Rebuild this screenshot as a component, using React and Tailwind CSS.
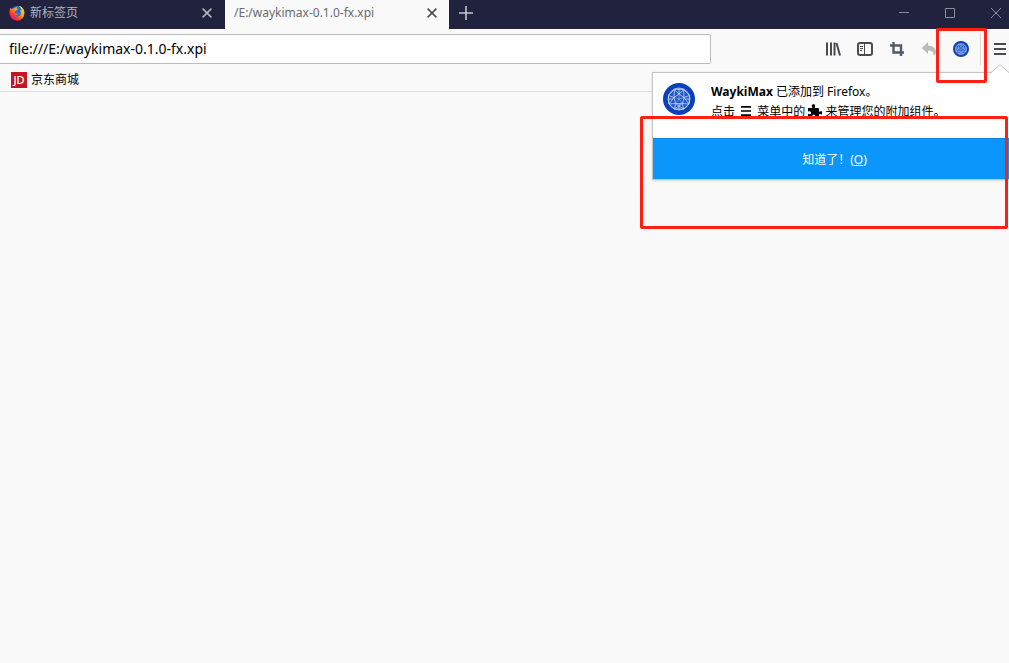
import React from "react";

function FirefoxLogo() {
  return (
    <svg viewBox="0 0 16 16" className="size-4 shrink-0" aria-hidden="true">
      <defs>
        <linearGradient id="flame" x1="0.9" y1="0.1" x2="0.2" y2="0.9">
          <stop offset="0" stopColor="#ffe226" />
          <stop offset="0.45" stopColor="#ff9a16" />
          <stop offset="0.75" stopColor="#ff3b2f" />
          <stop offset="1" stopColor="#e0157a" />
        </linearGradient>
      </defs>
      <circle cx="8" cy="7.6" r="6.6" fill="#1b6fe0" />
      <path
        d="M1.3 2.8 3 4.2C4 3.2 5 3 5.8 3.2L7.6 1.4c0 1.4.4 2.2 1.2 3L6.900 5.700C6 6.200 5.600 7 6 7.800c.8 1.300 2.400.2 3.500.8-.7 1.500-2.700 2.300-4.200 1.400 1 1.700 4 2.200 5.600.5 1.500-1.700 1.300-4-.1-5.600 1 .2 1.500.7 1.900 1.300C12.600 4 11.400 2.300 9.500.8c3.300.6 6 3.400 6 7.300A7.500 7.500 0 0 1 .5 8.200C.4 6 .8 4.300 1.300 2.800Z"
        fill="url(#flame)"
      />
    </svg>
  );
}

function CloseIcon() {
  return (
    <svg viewBox="0 0 10 10" className="size-2.5" fill="none" stroke="currentColor" strokeWidth="1.5" aria-hidden="true">
      <path d="M.6.6 9.400 9.400M9.400.6.6 9.400" />
    </svg>
  );
}

function LibraryIcon() {
  return (
    <svg viewBox="0 0 16 16" className="size-4" fill="none" stroke="#4a4a4f" strokeWidth="2" aria-hidden="true">
      <path d="M2 1.500v13M6 1.500v13M9.500 1.500v13M11.500 2l3.500 12.500" />
    </svg>
  );
}

function SidebarIcon() {
  return (
    <svg viewBox="0 0 16 16" className="size-4" fill="none" stroke="#4a4a4f" aria-hidden="true">
      <rect x="1" y="2" width="14" height="12" rx="2" strokeWidth="2" />
      <path d="M7.500 3v10" strokeWidth="1" />
      <path d="M3 5.500h3M3 7.500h3M3 9.500h2" strokeWidth="1" />
    </svg>
  );
}

function CropIcon() {
  return (
    <svg viewBox="0 0 16 16" className="size-4" fill="none" stroke="#4f5b66" strokeWidth="2.400" aria-hidden="true">
      <path d="M1 4.500h11V15M4.500 1v10.500H15" />
    </svg>
  );
}

function UndoIcon() {
  return (
    <svg viewBox="0 0 16 16" className="size-4" fill="#b9bbbe" aria-hidden="true">
      <path d="M7 1v3.500c5 .1 8 3.300 8 6.500 0 1.700-1 3-2.600 3.600.8-3.300-1.700-5-5.400-5V13L.8 7Z" />
    </svg>
  );
}

function MenuIcon({ className }) {
  return (
    <svg viewBox="0 0 12 12" className={className} stroke="currentColor" strokeWidth="2" aria-hidden="true">
      <path d="M0 1h12M0 6h12M0 11h12" />
    </svg>
  );
}

function PuzzleIcon() {
  return (
    <svg viewBox="1 1 14 14" className="inline size-3.5 align-[-2px]" aria-hidden="true">
      <path d="M1 5h3.700c.8 0 .8-.5.5-1C4.300 2.400 5 1.200 6.500 1.200S8.700 2.400 7.900 4c-.3.600-.2 1 .6 1H11c.6 0 1 .4 1 1v2c0 .8.500.9 1.100.5 1.300-.8 2.700-.1 2.700 1.300s-1.400 2.100-2.700 1.300c-.6-.4-1.100-.2-1.100.6V14c0 .6-.4 1-1 1H8.500c-.8 0-.9-.5-.5-1.100.7-1.100.1-2.100-1.200-2.100s-2 1-1.300 2.100c.4.600.3 1.100-.5 1.100H2c-.6 0-1-.4-1-1v-2.500c0-.8.500-.8 1-.5 1.200.7 2.100 0 2.100-1.200S3.200 7.700 2 8.400c-.6.300-1 .2-1-.6Z" />
    </svg>
  );
}

function WaykiLogo({ className }) {
  return (
    <svg viewBox="0 0 32 32" className={className} aria-hidden="true">
      <circle cx="16" cy="16" r="16" fill="#0a40ba" />
      <circle cx="16" cy="16" r="11" fill="#1f55c4" />
      <g fill="none" stroke="#c3d6fb" strokeWidth="0.8">
        <circle cx="16" cy="16" r="11" />
        <path d="M16 5v6M16 21v6M5 16h5M22 16h5M16 11l5 3.500-1.500 6h-7L11 14.500ZM16 11l-5-4.500M16 11l5-4.500M11 14.500 5.500 12.500M11 14.500l.300-8M21 14.500l5.500-2M21 14.500l-.300-8M12.500 20.500 6 21M12.500 20.500l-1 5.500M19.500 20.500 26 21M19.500 20.500l1 5.500M11.300 6.500h9.400M26.500 12.500 26 21M5.500 12.500 6 21M11.500 26h9M11 14.500 6 21M21 14.500l5 6.500M12.500 20.500l8 5.500M19.500 20.500l-8 5.500" />
        <path d="M16 16v-5M16 16l5-1.500M16 16l3.500 4.500M16 16l-3.500 4.500M16 16l-5-1.500" strokeWidth="0.5" />
        <path d="M5.500 12.500 11.300 6.500M26.500 12.500 20.700 6.500M6 21l5.500 5M26 21l-5.500 5" />
      </g>
    </svg>
  );
}

function TabStrip() {
  return (
    <header className="flex h-[29px] bg-[#20223e] text-[12px]">
      <div className="flex w-[225px] items-center gap-1 pl-[9px] pr-[13px] pb-1 text-[#b4b5bf]">
        <FirefoxLogo />
        <span className="flex-1 pl-px">新标签页</span>
        <button aria-label="关闭标签页"><CloseIcon /></button>
      </div>
      <div className="flex w-[224px] items-center justify-between bg-[#f9f9fa] pl-[9px] pr-3 pb-1 text-[#6a6a6e]">
        <span>/E:/waykimax-0.1.0-fx.xpi</span>
        <button aria-label="关闭标签页" className="text-[#4a4a4f]"><CloseIcon /></button>
      </div>
      <button aria-label="新建标签页" className="px-2.5 pb-1 text-[#c4c5cd]">
        <svg viewBox="0 0 14 14" className="size-3.5" stroke="currentColor" strokeWidth="1.600" aria-hidden="true">
          <path d="M7 0v14M0 7h14" />
        </svg>
      </button>
      <div className="ml-auto flex items-center gap-9 pr-2 pb-1 text-[#8d8e9d]">
        <button aria-label="最小化">
          <svg viewBox="0 0 10 10" className="size-2.5" stroke="currentColor" aria-hidden="true"><path d="M0 4.500h10" /></svg>
        </button>
        <button aria-label="最大化">
          <svg viewBox="0 0 10 10" className="size-2.5" fill="none" stroke="currentColor" aria-hidden="true"><path d="M.5.5h9v9h-9z" /></svg>
        </button>
        <button aria-label="关闭">
          <svg viewBox="0 0 10 10" className="size-2.5" stroke="currentColor" aria-hidden="true"><path d="m0 0 10 10M10 0 0 10" /></svg>
        </button>
      </div>
    </header>
  );
}

function AddonNotice() {
  return (
    <section
      aria-label="附加组件通知"
      className="absolute top-[43px] -right-2 w-[365px] border border-[#c4c4c4] bg-white text-[12px] leading-5 text-black shadow-sm"
    >
      <svg viewBox="0 0 20 10" className="absolute right-[6px] -top-[9px] h-2.5 w-5" aria-hidden="true">
        <path d="M0 10 10 .7 20 10Z" fill="#fff" />
        <path d="M0 9.500 10 .7l10 8.800" fill="none" stroke="#c4c4c4" />
      </svg>
      <div className="flex h-[65px] items-start gap-4 px-2.5 pt-2">
        <WaykiLogo className="mt-0.5 size-8 shrink-0" />
        <div className="whitespace-nowrap pt-px">
          <p><strong>WaykiMax</strong> 已添加到 Firefox。</p>
          <p>
            点击 <MenuIcon className="mx-0.5 inline h-2.5 w-3 align-baseline" /> 菜单中的 <PuzzleIcon /> 来管理您的附加组件。
          </p>
        </div>
      </div>
      <button className="block h-[41px] w-full border-t border-[#0a84e0] bg-[#0a96fa] pt-px text-white">
        知道了！(<u>O</u>)
      </button>
    </section>
  );
}

export default function App() {
  return (
    <div className="relative min-h-screen overflow-hidden bg-[#f9f9fa] font-['Noto_Sans','Noto_Sans_CJK_SC',sans-serif]">
      <TabStrip />
      <div className="relative border-b border-[#e0e0e1]">
        <div className="flex items-center justify-between pt-[5px]">
          <input
            aria-label="地址"
            defaultValue="file:///E:/waykimax-0.1.0-fx.xpi"
            className="h-[30px] w-[711px] rounded-r-xs border border-l-0 border-[#bcbcbc] bg-white pb-0.5 pl-[9px] text-[14px] text-black outline-none"
          />
          <div className="flex h-[30px] items-center gap-4 pr-[3px] text-[#4a4a4f]">
            <button aria-label="我的足迹"><LibraryIcon /></button>
            <button aria-label="侧栏"><SidebarIcon /></button>
            <button aria-label="截图"><CropIcon /></button>
            <button aria-label="撤销"><UndoIcon /></button>
            <button aria-label="WaykiMax"><WaykiLogo className="size-4" /></button>
            <div className="-ml-[5px] flex items-center gap-[13px]">
              <span className="h-8 w-px bg-[#d9d9da]" />
              <button aria-label="菜单"><MenuIcon className="size-3" /></button>
            </div>
          </div>
        </div>
        <nav className="flex h-[27px] items-center px-[11px] pt-1 text-[12px] text-black">
          <a href="#jd" className="flex items-center gap-1">
            <span className="flex size-4 items-center justify-center bg-[#c71622] text-[11px] leading-none font-medium text-white">JD</span>
            京东商城
          </a>
        </nav>
        <AddonNotice />
        <div className="pointer-events-none absolute -top-px right-[22px] h-[55px] w-[51px] rounded-xs border-3 border-[#ff2012]" />
        <div className="pointer-events-none absolute top-[87px] right-px h-[113px] w-[368px] rounded-xs border-3 border-[#ff2012]" />
      </div>
    </div>
  );
}
